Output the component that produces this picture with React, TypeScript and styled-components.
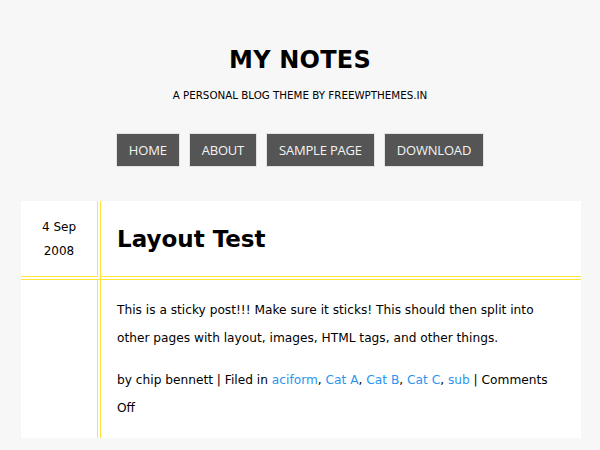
import React from "react";
import styled, { createGlobalStyle } from "styled-components";

const Global = createGlobalStyle`
  html, body { margin: 0; padding: 0; background: #f7f7f7; }
  body { font-family: "Comic Sans MS", "DejaVu Sans", sans-serif; color: #000; }
`;

const Page = styled.div`
  width: 600px;
  padding-top: 44px;
`;

const Header = styled.header`
  text-align: center;
`;

const SiteTitle = styled.h1`
  margin: 0;
  font-size: 24px;
  line-height: 32px;
  font-weight: bold;
  letter-spacing: 0.2px;
`;

const Tagline = styled.p`
  margin: 12px 0 0;
  font-size: 10.3px;
  line-height: 14px;
  text-transform: uppercase;
`;

const Nav = styled.nav`
  display: flex;
  justify-content: center;
  gap: 9px;
  margin-top: 31px;
`;

const NavItem = styled.a`
  display: block;
  height: 32px;
  line-height: 32px;
  padding: 0 12px;
  background: #555555;
  border: 1px solid #e2e2e2;
  color: #f4f4f4;
  font-family: "Open Sans", "DejaVu Sans", sans-serif;
  font-size: 13px;
  text-decoration: none;
  letter-spacing: -0.2px;
`;

const Card = styled.article`
  margin: 34px 0 0 21px;
  width: 560px;
  background: #fff;
  display: grid;
  grid-template-columns: 80px 1fr;
  grid-template-rows: 79px auto;
`;

const Cell = styled.div<{ $right?: boolean; $bottom?: boolean }>`
  border-right: ${(p) => (p.$right ? "4px double #ffe53a" : "none")};
  border-bottom: ${(p) => (p.$bottom ? "4px double #ffe53a" : "none")};
`;

const DateCell = styled(Cell)`
  display: flex;
  flex-direction: column;
  align-items: center;
  justify-content: center;
  font-size: 12px;
  line-height: 24px;
`;

const TitleCell = styled(Cell)`
  display: flex;
  align-items: center;
  padding-left: 16px;
`;

const PostTitle = styled.h2`
  margin: 0;
  font-size: 23px;
  font-weight: bold;
  letter-spacing: 0;
`;

const Content = styled.div`
  padding: 16px 12px 16px 16px;
  font-size: 12.2px;
  line-height: 28px;
`;

const Para = styled.p<{ $gap?: number }>`
  margin: ${(p) => p.$gap ?? 0}px 0 0;
`;

const Link = styled.a`
  color: #2b95f0;
  text-decoration: none;
`;

export default function App() {
  return (
    <Page>
      <Global />
      <Header>
        <SiteTitle>MY NOTES</SiteTitle>
        <Tagline>A personal blog theme by freewpthemes.in</Tagline>
        <Nav>
          <NavItem href="#">HOME</NavItem>
          <NavItem href="#">ABOUT</NavItem>
          <NavItem href="#">SAMPLE PAGE</NavItem>
          <NavItem href="#">DOWNLOAD</NavItem>
        </Nav>
      </Header>
      <Card>
        <DateCell $right $bottom>
          <span>4 Sep</span>
          <span>2008</span>
        </DateCell>
        <TitleCell $bottom>
          <PostTitle>Layout Test</PostTitle>
        </TitleCell>
        <Cell $right />
        <Content>
          <Para>
            This is a sticky post!!! Make sure it sticks! This should then split into other pages
            with layout, images, HTML tags, and other things.
          </Para>
          <Para $gap={14}>
            by chip bennett | Filed in <Link href="#">aciform</Link>, <Link href="#">Cat A</Link>,{" "}
            <Link href="#">Cat B</Link>, <Link href="#">Cat C</Link>, <Link href="#">sub</Link> |
            Comments Off
          </Para>
        </Content>
      </Card>
    </Page>
  );
}
